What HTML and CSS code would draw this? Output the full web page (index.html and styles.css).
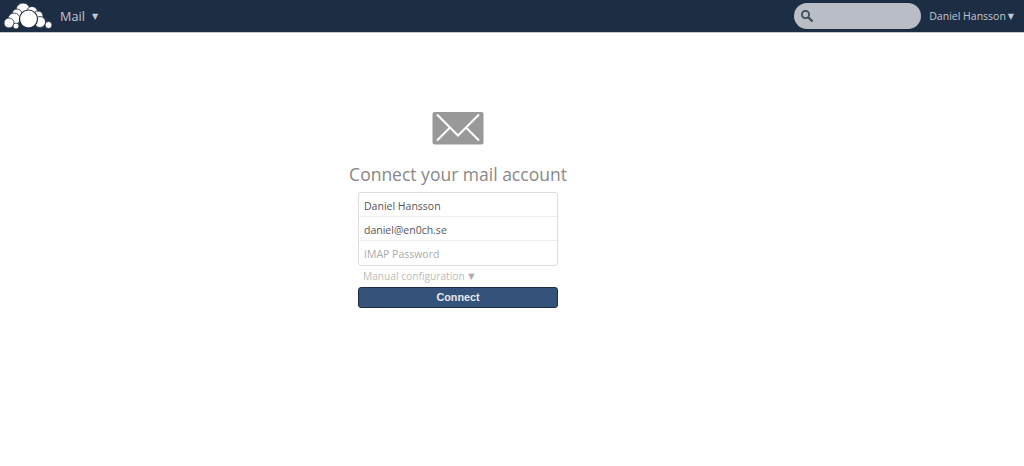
FILE: index.html
```html
<!DOCTYPE html>
<html lang="en">
<head>
    <meta charset="UTF-8">
    <title>Mail</title>
    <link rel="stylesheet" href="styles.css">
</head>
<body>
    <header class="topbar">
        <div class="topbar-left">
            <svg class="logo" width="50" height="30" viewBox="0 0 50 30" fill="#fff" stroke="#1d2d44" stroke-width="0.8">
                <circle cx="20" cy="9" r="7"/>
                <circle cx="14" cy="13" r="5"/>
                <circle cx="29" cy="11" r="5.5"/>
                <circle cx="35" cy="15" r="5"/>
                <circle cx="11" cy="18" r="6"/>
                <circle cx="6" cy="22" r="5"/>
                <circle cx="13" cy="25" r="3"/>
                <circle cx="37" cy="21" r="5.5"/>
                <circle cx="45.5" cy="24" r="3.5"/>
                <circle cx="25.5" cy="18" r="9" stroke-width="1.2"/>
            </svg>
            <span class="app-name">Mail</span>
            <span class="caret app-caret">▼</span>
        </div>
        <div class="topbar-right">
            <div class="search">
                <svg width="14" height="14" viewBox="0 0 14 14" fill="none" stroke="#3f4c5c">
                    <circle cx="5.5" cy="5.5" r="3.6" stroke-width="1.8"/>
                    <path d="M8.5 8.5l4 4" stroke-width="2.4"/>
                </svg>
            </div>
            <span class="user-name">Daniel Hansson</span>
            <span class="caret user-caret">▼</span>
        </div>
    </header>

    <main class="setup">
        <svg class="mail-icon" width="52" height="33" viewBox="0 0 52 33">
            <rect x="0.5" width="51" height="32.5" rx="2" fill="#999"/>
            <path d="M5 2.5l21 21 21-21M5 28.5l13-13M47 28.5l-13-13" fill="none" stroke="#fff" stroke-width="2"/>
        </svg>
        <h1>Connect your mail account</h1>
        <form class="setup-form">
            <div class="fields">
                <input class="field" type="text" value="Daniel Hansson">
                <input class="field" type="text" value="daniel@en0ch.se">
                <input class="field" type="password" placeholder="IMAP Password">
            </div>
            <div class="manual">Manual configuration <span class="manual-caret">▼</span></div>
            <button class="connect" type="button">Connect</button>
        </form>
    </main>
</body>
</html>
```

FILE: styles.css
```css
html, body {
    margin: 0;
    height: 100%;
    background: #fff;
}
body {
    font-family: "Open Sans", "Liberation Sans", sans-serif;
    overflow: hidden;
}
.topbar {
    height: 32px;
    border-bottom: 1px solid #c5cad1;
    background: #1d2d44;
    display: flex;
    justify-content: space-between;
}
.topbar-left, .topbar-right {
    display: flex;
    align-items: center;
}
.logo {
    margin-left: 3px;
}
.app-name {
    margin-left: 7px;
    font-size: 12.7px;
    color: #c2c7cf;
}
.caret {
    font-family: "DejaVu Sans", sans-serif;
    font-size: 8px;
    color: #c2c7cf;
}
.app-caret {
    margin-left: 7px;
}
.search {
    width: 127px;
    height: 26px;
    border-radius: 13px;
    background: #b9bdc5;
    display: flex;
    align-items: center;
    padding-left: 6px;
    box-sizing: border-box;
}
.user-name {
    margin-left: 8px;
    font-size: 10.5px;
    color: #c2c7cf;
}
.user-caret {
    margin-left: 2px;
    margin-right: 10px;
}
.setup {
    width: 220px;
    margin-left: 348px;
    display: flex;
    flex-direction: column;
    align-items: center;
    padding-top: 79px;
}
h1 {
    margin: 17px 0 0;
    font-size: 17.5px;
    font-weight: 400;
    line-height: 25px;
    color: #888;
    white-space: nowrap;
}
.setup-form {
    width: 200px;
    margin-top: 5px;
}
.fields {
    border: 1px solid #ddd;
    border-radius: 3px;
    background: #fff;
}
.field {
    display: block;
    width: 100%;
    height: 24px;
    box-sizing: border-box;
    border: 0;
    border-bottom: 1px solid #eee;
    padding: 2px 5px 0;
    font-family: inherit;
    font-size: 10.5px;
    color: #555;
    background: transparent;
}
.field:last-child {
    border-bottom: 0;
    padding-top: 1px;
}
.field::placeholder {
    color: #aaa;
    opacity: 1;
}
.manual {
    margin-top: 2px;
    padding-left: 5px;
    height: 19px;
    font-size: 10.2px;
    line-height: 16px;
    color: #bbb;
}
.manual-caret {
    margin-left: 1px;
    font-family: "DejaVu Sans", sans-serif;
    font-size: 8px;
    color: #aaa;
    vertical-align: 1px;
}
.connect {
    display: block;
    width: 100%;
    height: 21px;
    padding: 0 0 2px;
    border: 1px solid #1d2d44;
    border-radius: 3px;
    background: #35537a;
    color: #e6e9ee;
    font-family: "Liberation Sans", Arial, sans-serif;
    font-size: 10.8px;
    font-weight: 700;
}
```
